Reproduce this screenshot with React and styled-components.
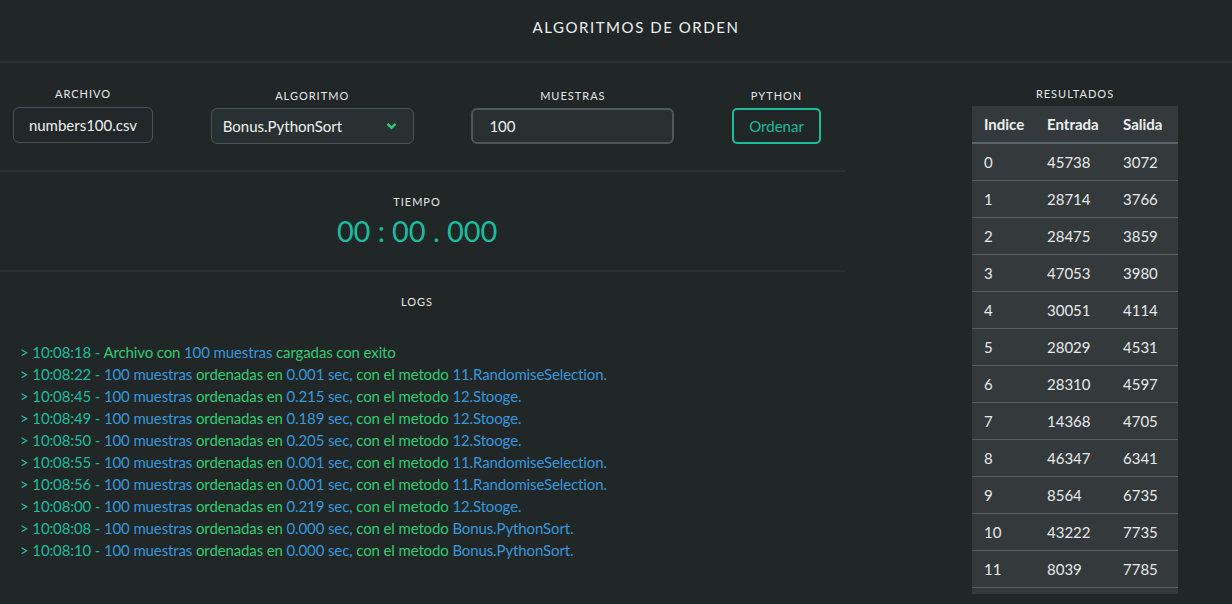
import React from "react";
import styled, { createGlobalStyle } from "styled-components";

const C = {
  bg: "#212627",
  line: "#2b3132",
  text: "#e6e9ea",
  teal: "#1abc9c",
  green: "#2ecc71",
  blue: "#3498db",
  panel: "#343a3c",
  rowLine: "#566062",
};

const GlobalStyle = createGlobalStyle`
  * { box-sizing: border-box; }
  html, body { margin: 0; padding: 0; background: ${C.bg}; }
  body { font-family: Lato, "Open Sans", "Liberation Sans", sans-serif; color: ${C.text}; }
`;

const Page = styled.div`
  width: 1232px;
  height: 604px;
  overflow: hidden;
  background: ${C.bg};
`;

const Header = styled.header`
  height: 63px;
  border-bottom: 2px solid ${C.line};
  display: flex;
  align-items: center;
  justify-content: center;
  padding-bottom: 8px;
  padding-left: 40px;
`;

const Title = styled.h1`
  margin: 0;
  font-size: 15px;
  font-weight: 400;
  letter-spacing: 1.55px;
  color: #eef0f0;
`;

const Main = styled.main`
  display: flex;
  align-items: flex-start;
`;

const LeftPanel = styled.section`
  width: 845px;
  display: flex;
  flex-direction: column;
`;

const Controls = styled.div`
  display: flex;
  align-items: flex-start;
  gap: 57.7px;
  padding: 26px 0 26px 13px;
`;

const Field = styled.div`
  display: flex;
  flex-direction: column;
  align-items: center;
  margin-top: ${(p) => (p.$raised ? "-2px" : "0")};
`;

const Label = styled.div`
  font-size: 11px;
  line-height: 13px;
  letter-spacing: 1px;
  text-transform: uppercase;
  color: #e4e7e8;
  margin-bottom: ${(p) => (p.$gap ? p.$gap : 6)}px;
`;

const InputBox = styled.div`
  width: ${(p) => p.$w}px;
  height: 36px;
  display: flex;
  align-items: center;
  justify-content: ${(p) => (p.$center ? "center" : "space-between")};
  padding: 0 ${(p) => (p.$center ? 0 : 16)}px 0 ${(p) => (p.$center ? 0 : 11)}px;
  background: ${(p) => p.$bg || "#232a2b"};
  border: ${(p) => p.$bw || 1}px solid ${(p) => p.$bc || "#4a5254"};
  border-radius: 6px;
  font-size: 15px;
  color: #eef0f0;
`;

const NumberInput = styled(InputBox)`
  padding-left: 16px;
`;

const Button = styled.button`
  width: 89px;
  height: 36px;
  background: transparent;
  border: 2px solid ${C.teal};
  border-radius: 5px;
  font-family: inherit;
  font-size: 15px;
  color: ${C.teal};
  padding: 0;
`;

const Divider = styled.hr`
  margin: 0;
  border: 0;
  height: 2px;
  width: 845px;
  background: ${C.line};
`;

const CenterSection = styled.div`
  display: flex;
  flex-direction: column;
  align-items: center;
  padding-right: 11px;
  padding-top: ${(p) => (p.$pt !== undefined ? p.$pt : 23)}px;
  padding-bottom: ${(p) => p.$pb || 0}px;
`;

const Timer = styled.div`
  font-size: 29px;
  line-height: 34px;
  letter-spacing: -0.1px;
  color: ${C.teal};
  white-space: pre;
`;

const LogsSection = styled.div`
  display: flex;
  flex-direction: column;
  padding-top: 23px;
`;

const LogList = styled.div`
  margin-top: 27px;
  padding-left: 20px;
  display: flex;
  flex-direction: column;
`;

const LogLine = styled.div`
  font-size: 15px;
  line-height: 22px;
  letter-spacing: -0.12px;
  white-space: pre;
`;

const Seg = styled.span`
  color: ${(p) => C[p.$c]};
`;

const ResultsPanel = styled.aside`
  margin-left: 127px;
  width: 206px;
  display: flex;
  flex-direction: column;
  align-items: center;
  padding-top: 24px;
`;

const TableScroll = styled.div`
  width: 206px;
  height: 488px;
  overflow: hidden;
  background: ${C.panel};
`;

const Table = styled.table`
  width: 206px;
  table-layout: fixed;
  border-collapse: separate;
  border-spacing: 0;
  font-size: 15px;
`;

const Th = styled.th`
  width: ${(p) => p.$w}px;
  text-align: left;
  font-weight: 700;
  padding: 0 0 0 12px;
  line-height: 36px;
  border-bottom: 2px solid #5b6567;
  color: #eceeef;
`;

const Td = styled.td`
  padding: 0 0 0 12px;
  line-height: 36px;
  border-bottom: 1px solid ${C.rowLine};
  color: #e6e9ea;
`;

const Chevron = () => (
  <svg width="11" height="8" viewBox="0 0 11 8">
    <polyline
      points="1.5,1.8 5.5,5.8 9.5,1.8"
      fill="none"
      stroke={C.green}
      strokeWidth="2.5"
    />
  </svg>
);

const stamp = (t) => ["> " + t + " - ", "teal"];

const sortLine = (t, secs, method) => [
  stamp(t),
  ["100 muestras", "blue"],
  [" ordenadas en ", "green"],
  [secs + " sec,", "blue"],
  [" con el metodo ", "green"],
  [method, "blue"],
];

const logs = [
  [stamp("10:08:18"), ["Archivo con ", "green"], ["100 muestras", "blue"], [" cargadas con exito", "green"]],
  sortLine("10:08:22", "0.001", "11.RandomiseSelection."),
  sortLine("10:08:45", "0.215", "12.Stooge."),
  sortLine("10:08:49", "0.189", "12.Stooge."),
  sortLine("10:08:50", "0.205", "12.Stooge."),
  sortLine("10:08:55", "0.001", "11.RandomiseSelection."),
  sortLine("10:08:56", "0.001", "11.RandomiseSelection."),
  sortLine("10:08:00", "0.219", "12.Stooge."),
  sortLine("10:08:08", "0.000", "Bonus.PythonSort."),
  sortLine("10:08:10", "0.000", "Bonus.PythonSort."),
];

const rows = [
  [45738, 3072],
  [28714, 3766],
  [28475, 3859],
  [47053, 3980],
  [30051, 4114],
  [28029, 4531],
  [28310, 4597],
  [14368, 4705],
  [46347, 6341],
  [8564, 6735],
  [43222, 7735],
  [8039, 7785],
];

export default function App() {
  return (
    <>
      <GlobalStyle />
      <Page>
        <Header>
          <Title>ALGORITMOS DE ORDEN</Title>
        </Header>
        <Main>
          <LeftPanel>
            <Controls>
              <Field $raised>
                <Label $gap={7}>Archivo</Label>
                <InputBox $w={140} $center $bg="#222829">
                  numbers100.csv
                </InputBox>
              </Field>
              <Field>
                <Label>Algoritmo</Label>
                <InputBox $w={203} $bg="#283031">
                  Bonus.PythonSort
                  <Chevron />
                </InputBox>
              </Field>
              <Field>
                <Label>Muestras</Label>
                <NumberInput $w={203} $bg="#283031" $bw={2} $bc="#4f5759">
                  100
                </NumberInput>
              </Field>
              <Field>
                <Label>Python</Label>
                <Button>Ordenar</Button>
              </Field>
            </Controls>
            <Divider />
            <CenterSection $pb={22}>
              <Label>Tiempo</Label>
              <Timer>{"00 : 00 . 000"}</Timer>
            </CenterSection>
            <Divider />
            <LogsSection>
              <CenterSection $pt={0}>
                <Label>Logs</Label>
              </CenterSection>
              <LogList>
                {logs.map((line, i) => (
                  <LogLine key={i}>
                    {line.map(([txt, c], j) => (
                      <Seg key={j} $c={c}>
                        {txt}
                      </Seg>
                    ))}
                  </LogLine>
                ))}
              </LogList>
            </LogsSection>
          </LeftPanel>
          <ResultsPanel>
            <Label>Resultados</Label>
            <TableScroll>
              <Table>
                <thead>
                  <tr>
                    <Th $w={63}>Indice</Th>
                    <Th $w={76}>Entrada</Th>
                    <Th $w={67}>Salida</Th>
                  </tr>
                </thead>
                <tbody>
                  {rows.map(([a, b], i) => (
                    <tr key={i}>
                      <Td>{i}</Td>
                      <Td>{a}</Td>
                      <Td>{b}</Td>
                    </tr>
                  ))}
                </tbody>
              </Table>
            </TableScroll>
          </ResultsPanel>
        </Main>
      </Page>
    </>
  );
}
